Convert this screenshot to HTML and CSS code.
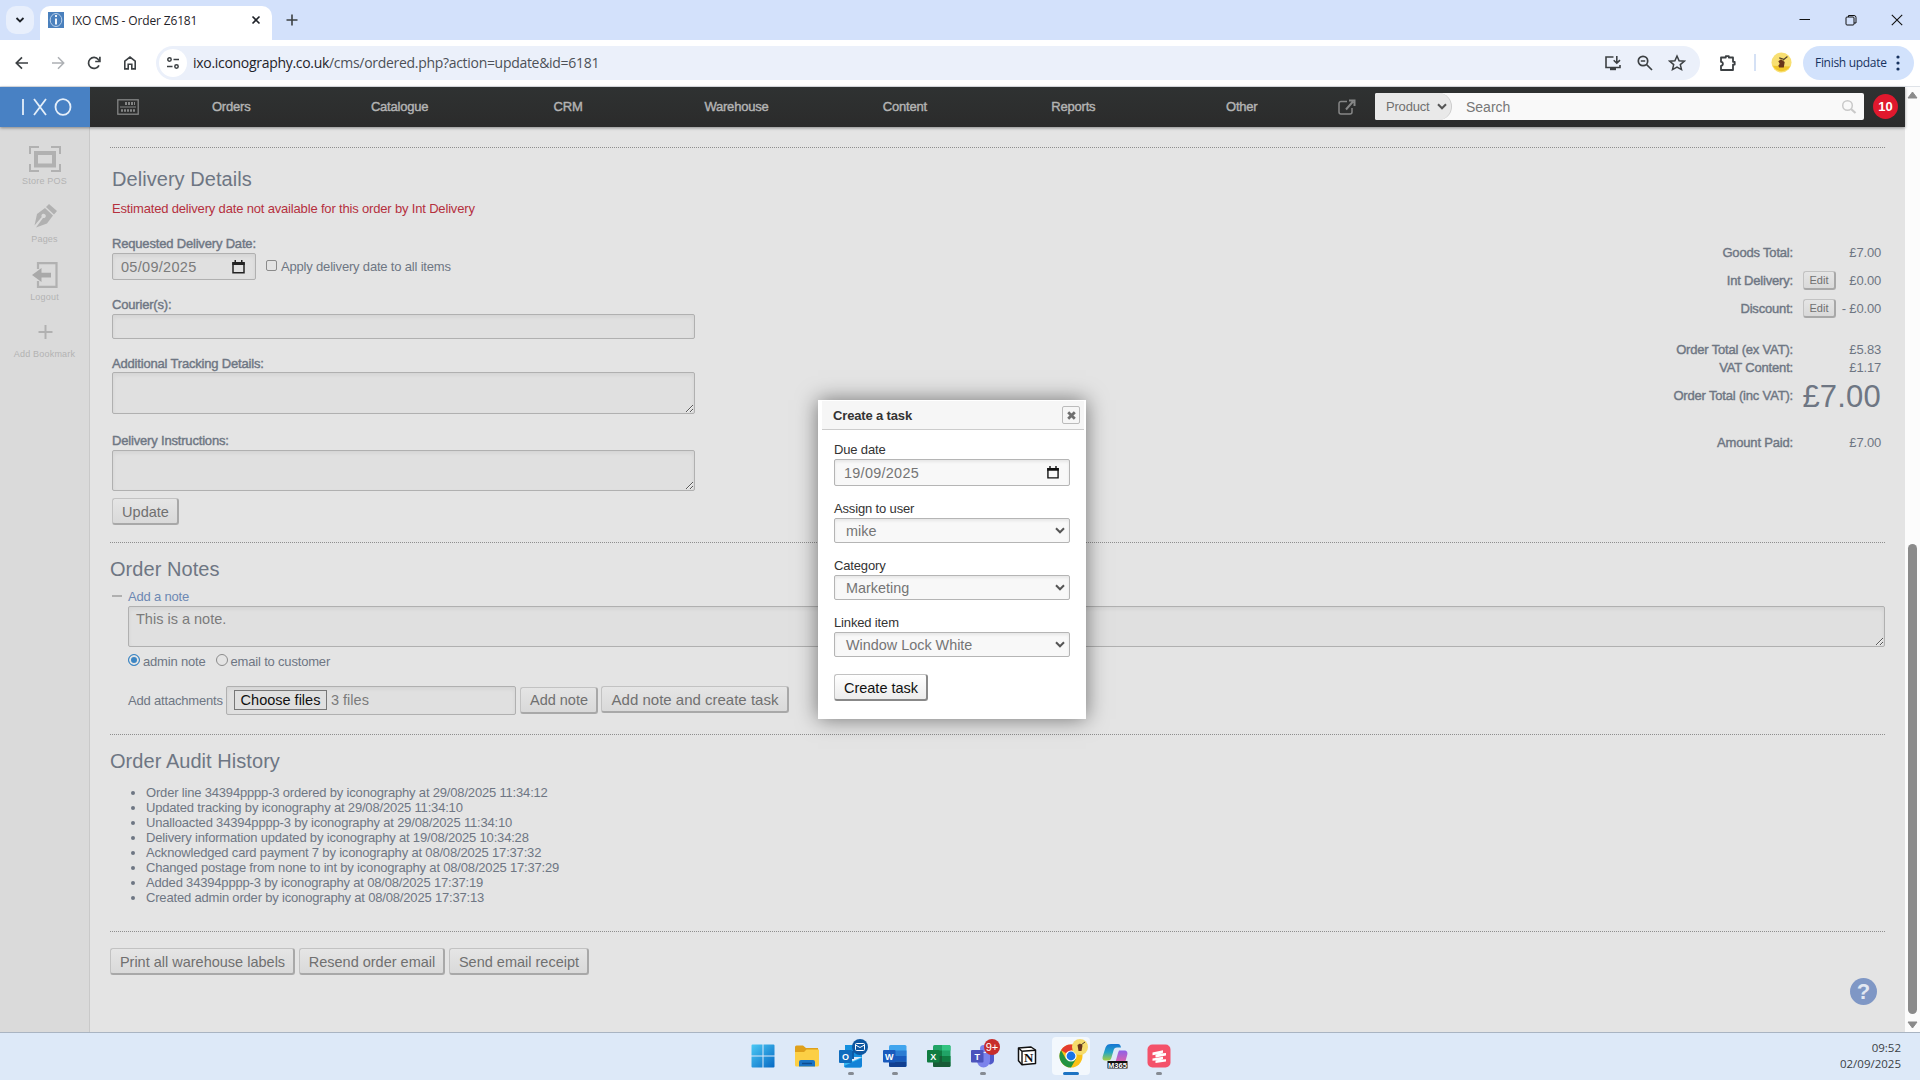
FILE: index.html
```html
<!DOCTYPE html>
<html lang="en">
<head>
    <meta charset="UTF-8">
    <title>IXO CMS - Order Z6181</title>
    <link rel="stylesheet" href="styles.css">
</head>
<body>
    <div class="tabstrip">
        <div class="tab-search"><svg width="10" height="8" viewBox="0 0 10 8"><path d="M1.5 2l3.5 3.5L8.500 2" fill="none" stroke="#1f2329" stroke-width="1.8"/></svg></div>
        <div class="tab">
            <svg width="16" height="16" viewBox="0 0 16 16"><rect width="16" height="16" fill="#4a80bd"/><ellipse cx="8" cy="8" rx="5.800" ry="6.500" fill="none" stroke="#b9d0ea"/><path d="M8 3v2M8 6.500v6" stroke="#fff" stroke-width="1.800"/></svg>
            <span class="tab-title">IXO CMS - Order Z6181</span>
            <svg class="tab-close" width="10" height="10" viewBox="0 0 10 10"><path d="M1.500 1.500l7 7M8.500 1.500l-7 7" stroke="#1f2329" stroke-width="1.600"/></svg>
        </div>
        <svg class="new-tab" width="12" height="12" viewBox="0 0 12 12"><path d="M6 .5v11M.5 6h11" stroke="#3c4043" stroke-width="1.600"/></svg>
        <div class="win-buttons">
            <svg width="12" height="12" viewBox="0 0 12 12"><path d="M.5 5.500h10.500" stroke="#111"/></svg>
            <svg width="12" height="12" viewBox="0 0 12 12" fill="none" stroke="#111"><rect x="1" y="3" width="8" height="8" rx="1"/><path d="M3.500 3V1.500h5.500a2 2 0 0 1 2 2v5.500H9"/></svg>
            <svg width="12" height="12" viewBox="0 0 12 12"><path d="M.8 .8l10.400 10.400M11.200 .8L.8 11.200" stroke="#111" stroke-width="1.100"/></svg>
        </div>
    </div>

    <div class="toolbar">
        <svg class="tool" width="16" height="16" viewBox="0 0 16 16"><path d="M14 8H2.500M8 2.300L2.300 8 8 13.700" fill="none" stroke="#3c4043" stroke-width="1.700"/></svg>
        <svg class="tool" width="16" height="16" viewBox="0 0 16 16"><path d="M2 8h11.500M8 2.300L13.700 8 8 13.700" fill="none" stroke="#adb0b4" stroke-width="1.500"/></svg>
        <svg class="tool" width="16" height="16" viewBox="0 0 16 16"><path d="M13 10.300A5.500 5.500 0 1 1 12.300 4.500L13.400 5.800" fill="none" stroke="#3c4043" stroke-width="1.700"/><path d="M13.900 1.800v4.700H9.200" fill="none" stroke="#3c4043" stroke-width="1.700"/></svg>
        <svg class="tool" width="16" height="16" viewBox="0 0 16 16"><path d="M2.800 6.200L8 2.100l5.200 4.100v7.700h-3.400V9.200H6.200v4.700H2.800z" fill="none" stroke="#3c4043" stroke-width="1.600"/></svg>
        <div class="omnibox">
            <span class="site-info"><svg width="14" height="14" viewBox="0 0 14 14" fill="none" stroke="#3c4043" stroke-width="1.500"><circle cx="3.500" cy="3.500" r="1.700"/><path d="M7.500 3.500H13M1 10.500h5.500"/><circle cx="10.500" cy="10.500" r="1.700"/></svg></span>
            <span class="url">ixo.iconography.co.uk<span>/cms/ordered.php?action=update&amp;id=6181</span></span>
            <div class="omni-icons">
                <svg width="18" height="18" viewBox="0 0 18 18" fill="none" stroke="#3c4043" stroke-width="1.600"><path d="M9.500 3H2v10.500h14V11M12.800 2v7M9.700 6.200l3.100 3 3.200-3"/><path d="M6 15h6" stroke-width="2.400"/></svg>
                <svg width="18" height="18" viewBox="0 0 18 18" fill="none" stroke="#3c4043" stroke-width="1.700"><circle cx="7" cy="7" r="4.700"/><path d="M4.800 7h4.400M10.500 10.500l5.500 5.500"/></svg>
                <svg width="18" height="18" viewBox="0 0 18 18" fill="none" stroke="#3c4043" stroke-width="1.500"><path d="M9 2l2.100 4.700 5.100.500-3.900 3.400 1.200 5L9 13l-4.500 2.600 1.200-5-3.900-3.400 5.100-.5z"/></svg>
            </div>
        </div>
        <svg class="puzzle" width="20" height="20" viewBox="0 0 20 20"><path d="M3 4.500h4.800V3.200h3v1.300H15v4.300h1.700v2.800H15V17H3v-4.200c2.500-.2 2.500-3.900 0-4z" fill="none" stroke="#3c4043" stroke-width="1.800" stroke-linejoin="round"/></svg>
        <span class="divider"></span>
        <svg class="avatar" width="21" height="21" viewBox="0 0 23 23"><circle cx="11.500" cy="11.500" r="11" fill="#f8df72"/><path d="M2 15a11 11 0 0 0 19 1" fill="#f1c62b"/><path d="M8 10l3-2 4 3-1 6H9l-1-2 1.500-2z" fill="#69351b"/><path d="M9 6.500l5 1.500M13 9l5-4" stroke="#53412b" stroke-width="1.300"/></svg>
        <div class="finish">Finish update <svg width="4" height="16" viewBox="0 0 4 16" fill="#17325f"><circle cx="2" cy="2" r="1.600"/><circle cx="2" cy="8" r="1.600"/><circle cx="2" cy="14" r="1.600"/></svg></div>
    </div>

    <div class="viewport">
        <div class="page">
            <div class="topnav">
                <div class="logo"><svg width="52" height="18" viewBox="0 0 52 18" fill="none" stroke="#e4eef9" stroke-width="1.800"><path d="M2 1v16M13 1l12 16M25 1L13 17"/><ellipse cx="42" cy="9" rx="7.500" ry="7.800"/></svg></div>
                <svg class="till" width="22" height="16" viewBox="0 0 22 16"><rect x=".8" y=".8" width="20.400" height="14.400" fill="none" stroke="#858686" stroke-width="1.300"/><path d="M8 4.500h10" stroke="#858686" stroke-width="3" stroke-dasharray="2 1"/><path d="M3 8h16" stroke="#858686"/><path d="M4 11.500h15" stroke="#858686" stroke-width="2.500" stroke-dasharray="2 1"/></svg>
                <div class="menu">
                    <a>Orders</a><a>Catalogue</a><a>CRM</a><a>Warehouse</a><a>Content</a><a>Reports</a><a>Other</a>
                </div>
                <svg class="external" width="18" height="16" viewBox="0 0 18 16" fill="none" stroke="#868787" stroke-width="1.500"><path d="M9 2.500H3a2 2 0 0 0-2 2v8.500a2 2 0 0 0 2 2h9a2 2 0 0 0 2-2V9"/><path d="M8 10.500l7-8M11 1.500h5.500V7" stroke-width="2"/></svg>
                <div class="search">
                    <span class="search-type">Product <svg width="10" height="7" viewBox="0 0 10 7"><path d="M1 1.300l4 4 4-4" fill="none" stroke="#555" stroke-width="2"/></svg></span>
                    <span class="search-text">Search</span>
                    <svg width="16" height="16" viewBox="0 0 16 16" fill="none" stroke="#c9c9c9"><circle cx="6.500" cy="6.500" r="4.800" stroke-width="1.500"/><path d="M10 10l4.500 4" stroke-width="2.200"/></svg>
                </div>
                <span class="alerts">10</span>
            </div>

            <div class="body">
                <div class="sidebar">
                    <div class="bookmark">
                        <svg width="32" height="26" viewBox="0 0 32 26" fill="none" stroke="#b1b1b1"><path d="M1 8V1h9M22 1h9v7M31 18v7h-9M10 25H1v-7" stroke-width="2"/><rect x="7" y="7" width="18" height="12.500" stroke-width="4"/></svg>
                        <span>Store POS</span>
                    </div>
                    <div class="bookmark">
                        <svg width="26" height="26" viewBox="0 0 26 26" fill="#b1b1b1"><path d="M17 0l8 7-3 3.500-8-7.500z"/><path d="M13 4l8 7.500-6 8-11 4 7-9.500a2.200 2.200 0 1 0-1.300-1L2.500 21.500 5 10z"/></svg>
                        <span>Pages</span>
                    </div>
                    <div class="bookmark">
                        <svg width="26" height="26" viewBox="0 0 26 26"><path d="M6 7V1.200h18.500v23.600H6V19" fill="none" stroke="#b1b1b1" stroke-width="2.200"/><path d="M0 13l9.500-7v4.800H19v4.600H9.500V20z" fill="#a9a9a9"/></svg>
                        <span>Logout</span>
                    </div>
                    <div class="bookmark last">
                        <svg width="26" height="26" viewBox="0 0 26 26"><path d="M13.500 6v14M6.500 13h14" stroke="#b1b1b1" stroke-width="2"/></svg>
                        <span>Add Bookmark</span>
                    </div>
                </div>

                <div class="content">
                    <div class="section delivery">
                        <div class="delivery-form">
                            <h2>Delivery Details</h2>
                            <p class="error">Estimated delivery date not available for this order by Int Delivery</p>
                            <label class="l1">Requested Delivery Date:</label>
                            <div class="date-row">
                                <div class="field date">05/09/2025 <svg width="13" height="14" viewBox="0 0 13 14"><path d="M1 3h11v9.800H1z" fill="none" stroke="#222" stroke-width="1.500"/><path d="M.3 2h12.400v3H.3zM2.500 0h1.500v3H2.500zM9 0h1.500v3H9z" fill="#222"/></svg></div>
                                <span class="checkbox"></span><span class="apply">Apply delivery date to all items</span>
                            </div>
                            <label class="l2">Courier(s):</label>
                            <div class="field courier"></div>
                            <label class="l3">Additional Tracking Details:</label>
                            <textarea class="field tracking"></textarea>
                            <label class="l4">Delivery Instructions:</label>
                            <textarea class="field instructions"></textarea>
                            <button class="btn update">Update</button>
                        </div>
                        <div class="totals">
                            <div><b>Goods Total:</b><span>£7.00</span></div>
                            <div><b>Int Delivery:</b><button class="btn small">Edit</button><span>£0.00</span></div>
                            <div><b>Discount:</b><button class="btn small">Edit</button><span>- £0.00</span></div>
                            <div class="short gap1"><b>Order Total (ex VAT):</b><span>£5.83</span></div>
                            <div class="short"><b>VAT Content:</b><span>£1.17</span></div>
                            <div class="grand"><b>Order Total (inc VAT):</b><span>£7.00</span></div>
                            <div class="short gap2"><b>Amount Paid:</b><span>£7.00</span></div>
                        </div>
                    </div>

                    <div class="section notes">
                        <h2>Order Notes</h2>
                        <div class="add-link"><i></i>Add a note</div>
                        <textarea class="field note">This is a note.</textarea>
                        <div class="radios"><span class="radio on"></span><span class="admin">admin note</span><span class="radio"></span><span class="customer">email to customer</span></div>
                        <div class="attach">
                            <span class="attach-label">Add attachments</span>
                            <div class="field files"><span class="choose">Choose files</span>3 files</div>
                            <button class="btn add-note">Add note</button>
                            <button class="btn add-task">Add note and create task</button>
                        </div>
                    </div>

                    <div class="section audit">
                        <h2>Order Audit History</h2>
                        <ul>
                            <li>Order line 34394pppp-3 ordered by iconography at 29/08/2025 11:34:12</li>
                            <li>Updated tracking by iconography at 29/08/2025 11:34:10</li>
                            <li>Unalloacted 34394pppp-3 by iconography at 29/08/2025 11:34:10</li>
                            <li>Delivery information updated by iconography at 19/08/2025 10:34:28</li>
                            <li>Acknowledged card payment 7 by iconography at 08/08/2025 17:37:32</li>
                            <li>Changed postage from none to int by iconography at 08/08/2025 17:37:29</li>
                            <li>Added 34394pppp-3 by iconography at 08/08/2025 17:37:19</li>
                            <li>Created admin order by iconography at 08/08/2025 17:37:13</li>
                        </ul>
                    </div>

                    <div class="section actions">
                        <button class="btn print">Print all warehouse labels</button>
                        <button class="btn resend">Resend order email</button>
                        <button class="btn receipt">Send email receipt</button>
                    </div>
                </div>
            </div>
        </div>
        <div class="scrollbar">
            <svg width="11" height="8" viewBox="0 0 11 8"><path d="M5.500 1L10 7H1z" fill="#8b8b8b" stroke="#8b8b8b" stroke-linejoin="round"/></svg>
            <span class="thumb"></span>
            <svg width="11" height="8" viewBox="0 0 11 8"><path d="M5.500 7L1 1h9z" fill="#8b8b8b" stroke="#8b8b8b" stroke-linejoin="round"/></svg>
        </div>
    </div>

    <div class="help">?</div>

    <div class="dialog">
        <div class="dialog-title">Create a task
            <span class="dialog-close"><svg width="9" height="9" viewBox="0 0 9 9"><path d="M1.200 1.200l6.600 6.600M7.800 1.200L1.200 7.800" stroke="#6f6f6f" stroke-width="2.800"/></svg></span>
        </div>
        <div class="dialog-body">
            <label>Due date</label>
            <div class="input due">19/09/2025 <svg width="12" height="13" viewBox="0 0 13 14"><path d="M1 3h11v9.800H1z" fill="none" stroke="#111" stroke-width="1.500"/><path d="M.3 2h12.400v3H.3zM2.500 0h1.500v3H2.500zM9 0h1.500v3H9z" fill="#111"/></svg></div>
            <label>Assign to user</label>
            <div class="input">mike <svg width="10" height="7" viewBox="0 0 10 7"><path d="M1 1.300l4 4 4-4" fill="none" stroke="#555" stroke-width="2"/></svg></div>
            <label>Category</label>
            <div class="input">Marketing <svg width="10" height="7" viewBox="0 0 10 7"><path d="M1 1.300l4 4 4-4" fill="none" stroke="#555" stroke-width="2"/></svg></div>
            <label>Linked item</label>
            <div class="input">Window Lock White <svg width="10" height="7" viewBox="0 0 10 7"><path d="M1 1.300l4 4 4-4" fill="none" stroke="#555" stroke-width="2"/></svg></div>
            <button class="btn create">Create task</button>
        </div>
    </div>

    <div class="taskbar">
        <div class="apps">
            <div class="app">
                <svg width="24" height="24" viewBox="0 0 24 24"><defs><linearGradient id="win" x2="1" y2="1"><stop stop-color="#4cc9f5"/><stop offset="1" stop-color="#0669c4"/></linearGradient></defs><path d="M1.500 .5h10v11H.5v-10a1 1 0 0 1 1-1zM12.500 .5h10a1 1 0 0 1 1 1v10h-11zM.5 12.500h11v11h-10a1 1 0 0 1-1-1zM12.500 12.500h11v10a1 1 0 0 1-1 1h-10z" fill="url(#win)"/></svg>
            </div>
            <div class="app">
                <svg width="26" height="24" viewBox="0 0 26 24"><path d="M1 3a1.500 1.500 0 0 1 1.500-1.500H9L12 4h12v8H1z" fill="#dfa01b"/><path d="M1 8h9l2.500-2.500H25V21a1.500 1.500 0 0 1-1.500 1.500h-21A1.500 1.500 0 0 1 1 21z" fill="#fccf45"/><path d="M5 22.500V18a2 2 0 0 1 2-2h12a2 2 0 0 1 2 2v4.500z" fill="#1974c5"/><path d="M8 19.500h10" stroke="#0c4b8e" stroke-width="1.500"/></svg>
            </div>
            <div class="app running">
                <svg width="24" height="24" viewBox="0 0 24 24"><path d="M6 1h17v12H6z" fill="#1490df"/><path d="M6 7h9v8H6z" fill="#0a5ca8"/><path d="M5 13l9 4 9-4v9a1.500 1.500 0 0 1-1.500 1.500H6.500A1.500 1.500 0 0 1 5 22z" fill="#35b8f1"/><path d="M5 22l18-8v8l-1.500 1.500H6.500z" fill="#1282d7"/><rect y="6" width="13" height="13" rx="1" fill="#0f6cbd"/><text x="6.500" y="16" class="app-letter">O</text></svg>
                <span class="badge mail"><svg width="10" height="8" viewBox="0 0 10 8" fill="none" stroke="#fff"><rect x=".5" y=".5" width="9" height="7" rx="1"/><path d="M.5 2L5 4.500 9.500 2"/></svg></span>
            </div>
            <div class="app running">
                <svg width="24" height="24" viewBox="0 0 24 24"><rect x="6" y="1" width="17.500" height="22" rx="1.500" fill="#41a5ee"/><path d="M6 6.500h17.500V12H6z" fill="#2b7cd3"/><path d="M6 12h17.500v5.500H6z" fill="#185abd"/><path d="M6 17.500h17.500v4A1.500 1.500 0 0 1 22 23H7.500A1.500 1.500 0 0 1 6 21.500z" fill="#103f91"/><rect y="6" width="12.500" height="12.500" rx="1" fill="#185abd"/><text x="6.200" y="15.800" class="app-letter">W</text></svg>
            </div>
            <div class="app">
                <svg width="24" height="24" viewBox="0 0 24 24"><rect x="6" y="1" width="17.500" height="22" rx="1.500" fill="#21a366"/><path d="M15 1h7a1.500 1.500 0 0 1 1.500 1.500v4H15z" fill="#33c481"/><path d="M6 6.500h9V12H6z" fill="#107c41"/><path d="M6 12h9v11H7.500A1.500 1.500 0 0 1 6 21.500z" fill="#185c37"/><path d="M15 12h8.500v5.500H15z" fill="#107c41"/><path d="M15 17.500h8.500v4A1.500 1.500 0 0 1 22 23h-7z" fill="#185c37"/><rect y="6" width="12.500" height="12.500" rx="1" fill="#107c41"/><text x="6.200" y="16" class="app-letter">X</text></svg>
            </div>
            <div class="app running">
                <svg width="24" height="24" viewBox="0 0 24 24"><circle cx="19.500" cy="7" r="2.500" fill="#5059c9"/><circle cx="12.500" cy="4.500" r="3.500" fill="#7b83eb"/><path d="M16 10h7v7a4 4 0 0 1-7 2z" fill="#5059c9"/><path d="M6 9h13v8a6.500 6.500 0 0 1-13 0z" fill="#7b83eb"/><rect y="6" width="12.500" height="12.500" rx="1" fill="#4b53bc"/><text x="6.200" y="16" class="app-letter">T</text></svg>
                <span class="badge count">9+</span>
            </div>
            <div class="app">
                <svg width="20" height="20" viewBox="0 0 20 20"><path d="M1.500 2L14 1l4.500 3v13.500L5 18.800l-3.500-4z" fill="#fff" stroke="#111" stroke-width="1.500" stroke-linejoin="round"/><path d="M1.500 2L5 5.200l13.500-1M5 5.200v13.600" fill="none" stroke="#111" stroke-width="1.400"/><text x="11.800" y="16" class="notion-n">N</text></svg>
            </div>
            <div class="app active">
                <svg width="24" height="24" viewBox="0 0 24 24"><circle cx="12" cy="12" r="11.500" fill="#fbc116"/><path d="M12 12L2.040 6.250A11.500 11.500 0 0 1 21.960 6.250H12z" fill="#e33b2e"/><path d="M2.040 6.250A11.500 11.500 0 0 0 12 23.500L17 14.900 12 12 7 14.900z" fill="#229342"/><circle cx="12" cy="12" r="5.600" fill="#fff"/><circle cx="12" cy="12" r="4.400" fill="#1a73e8"/></svg>
                <span class="badge bee"><svg width="16" height="16" viewBox="0 0 16 16"><circle cx="8" cy="8" r="8" fill="#f6dc6c"/><path d="M5.500 6L8 4.500l2.500 2-1 5.500H6.500z" fill="#69351b"/><path d="M9 6l4-3" stroke="#53412b"/></svg></span>
            </div>
            <div class="app">
                <svg width="26" height="26" viewBox="0 0 26 26"><defs><linearGradient id="cp1" x2="0" y2="1"><stop stop-color="#1574d4"/><stop offset=".5" stop-color="#25a5c4"/><stop offset="1" stop-color="#a8ce3d"/></linearGradient><linearGradient id="cp2" x2="0" y2="1"><stop stop-color="#8d62e8"/><stop offset="1" stop-color="#f2659c"/></linearGradient></defs><path d="M9 1h7c2 0 2.500 1.500 3 3.500H15c-2 0-3 1-3.500 3l-2 7c-.5 2-1.500 3-3 3H3c-2 0-3-1.500-2.300-4l2.800-9C4.500 2 6 1 9 1z" fill="url(#cp1)"/><path d="M17 7.500h5c3 0 4 2 3.200 4.500l-1.700 6c-.8 3-2.500 4-5 4H10c2 0 3-1 3.500-3l2.500-9z" fill="url(#cp2)"/><rect x="5.500" y="18" width="20" height="7.500" fill="#111"/><text x="15.500" y="24.500" class="m365">M365</text></svg>
            </div>
            <div class="app running">
                <svg width="24" height="24" viewBox="0 0 24 24"><rect x=".5" y=".5" width="23" height="23" rx="5" fill="#f4526a"/><path d="M5.500 8.500L16 6.200v2.600l-3 .7 6-.5v2.500L8.500 13.500v-2.600l2.500-.6-5.500.9zM5.500 14.500L16 12.700v2.400l-2.500.5 5.500-.4v2.300L8.500 19v-2.300l2.500-.5-5.500.6z" fill="#fff"/></svg>
            </div>
        </div>
        <div class="clock">09:52<br>02/09/2025</div>
    </div>
</body>
</html>
```
FILE: styles.css
```css
* {
    box-sizing: border-box;
}
body {
    margin: 0;
    width: 1920px;
    height: 1080px;
    overflow: hidden;
    font-family: "Liberation Sans", Arial, sans-serif;
    font-size: 13px;
    color: #6e7683;
}
svg {
    flex: none;
    display: block;
}

/* browser window */
.tabstrip {
    height: 40px;
    background: #d3e1fb;
    display: flex;
    align-items: center;
    padding-left: 6px;
}
.tab-search {
    width: 28px;
    height: 28px;
    border-radius: 10px;
    background: #e8effc;
    display: flex;
    align-items: center;
    justify-content: center;
}
.tab {
    align-self: flex-end;
    width: 232px;
    height: 34px;
    margin-left: 6px;
    padding: 0 11px 6px 8px;
    background: #fff;
    border-radius: 10px 10px 0 0;
    display: flex;
    align-items: center;
}
.tab-title {
    margin-left: 8px;
    font-family: "Open Sans", sans-serif;
    font-size: 12px;
    letter-spacing: -0.15px;
    color: #1f2329;
    white-space: nowrap;
}
.tab-close {
    margin-left: auto;
}
.new-tab {
    margin-left: 14px;
}
.win-buttons {
    margin-left: auto;
    margin-right: 17px;
    display: flex;
    gap: 34px;
}
.toolbar {
    height: 47px;
    background: #fff;
    display: flex;
    align-items: center;
    padding: 0 6px 1px 14px;
    border-bottom: 1px solid #dfe3e8;
}
.tool {
    margin-right: 20px;
}
.omnibox {
    width: 1544px;
    height: 34px;
    border-radius: 17px;
    background: #ebf0fa;
    display: flex;
    align-items: center;
    padding: 0 14px 0 3px;
    margin-left: -2px;
}
.site-info {
    width: 28px;
    height: 28px;
    border-radius: 50%;
    background: #fff;
    display: flex;
    align-items: center;
    justify-content: center;
}
.url {
    margin-left: 6px;
    font-family: "Open Sans", sans-serif;
    font-size: 14px;
    letter-spacing: -0.3px;
    color: #1f2329;
    white-space: nowrap;
}
.url span {
    color: #4d5157;
}
.omni-icons {
    margin-left: auto;
    display: flex;
    gap: 14px;
}
.puzzle {
    margin-left: 18px;
}
.divider {
    width: 2px;
    height: 17px;
    margin: 0 15px 0 16px;
    background: #d5e1f5;
}
.finish {
    margin-left: auto;
    width: 111px;
    height: 34px;
    border-radius: 17px;
    background: #d2e2fc;
    display: flex;
    align-items: center;
    justify-content: space-between;
    padding: 0 14px 0 12px;
    font-family: "Open Sans", sans-serif;
    font-size: 12px;
    letter-spacing: -0.3px;
    color: #17325f;
    white-space: nowrap;
}
.viewport {
    height: 945px;
    display: flex;
}
.page {
    width: 1905px;
}
.scrollbar {
    width: 15px;
    background: #fcfcfc;
    display: flex;
    flex-direction: column;
    align-items: center;
    padding: 4px 1px 3px 0;
}
.thumb {
    width: 9px;
    height: 470px;
    margin: auto 0 7px;
    border-radius: 5px;
    background: #8b8b8b;
}

/* top navigation */
.topnav {
    height: 40px;
    padding-bottom: 1px;
    background: linear-gradient(#2f3232, #2b2b2b);
    display: flex;
    align-items: center;
    position: relative;
    box-shadow: 0 1px 3px rgba(0, 0, 0, 0.4);
}
.logo {
    width: 90px;
    height: 40px;
    margin-bottom: -1px;
    background: #4881c4;
    display: flex;
    align-items: center;
    justify-content: center;
    padding: 0 0 1px 3px;
}
.till {
    margin-left: 27px;
}
.menu {
    width: 1179px;
    margin-left: 8px;
    display: flex;
}
.menu a {
    flex: 1;
    text-align: center;
    color: #b4b4b4;
    letter-spacing: -0.2px;
    -webkit-text-stroke: 0.4px #b4b4b4;
}
.external {
    margin-left: 12px;
}
.search {
    width: 489px;
    height: 27px;
    margin-left: 19px;
    border-radius: 2px;
    background: #f9f9f9;
    display: flex;
    align-items: center;
    padding-right: 7px;
}
.search-type {
    width: 77px;
    height: 27px;
    border-radius: 2px 14px 14px 2px;
    border-right: 1px solid #ccc;
    background: #e9e9e9;
    display: flex;
    align-items: center;
    justify-content: space-between;
    padding: 0 4px 0 11px;
    letter-spacing: -0.2px;
    color: #707070;
}
.search-text {
    margin-left: 14px;
    margin-right: auto;
    font-size: 14px;
    color: #777;
}
.alerts {
    width: 25px;
    height: 25px;
    margin-left: 9px;
    border-radius: 50%;
    background: #e0182d;
    color: #fff;
    font-weight: bold;
    text-align: center;
    line-height: 25px;
}

/* page body */
.body {
    height: 905px;
    display: flex;
}
.sidebar {
    width: 90px;
    background: #dadada;
    border-right: 1px solid #c9c9c9;
    padding-top: 19px;
}
.bookmark {
    height: 58px;
    display: flex;
    flex-direction: column;
    align-items: center;
    font-size: 9px;
    line-height: 12px;
    letter-spacing: 0.2px;
    color: #b3b3b3;
    white-space: nowrap;
}
.bookmark span {
    margin-top: 3px;
}
.last {
    margin-top: -1px;
}
.content {
    width: 1815px;
    padding: 20px 20px 0;
    background: #e4e4e4;
    letter-spacing: -0.18px;
}
.section {
    border-top: 1px dotted #8e8e8e;
    padding-top: 14px;
}
h2 {
    margin: 0;
    font-size: 20px;
    font-weight: normal;
    line-height: 24px;
    letter-spacing: 0.05px;
}
.field {
    border: 1px solid #b0b0b0;
    border-radius: 2px;
    background: #e0e0e0;
    box-shadow: inset 0 2px 4px rgba(0, 0, 0, 0.06);
    color: #7b7b7b;
    font-size: 14.5px;
    letter-spacing: 0;
    display: flex;
    align-items: center;
}
textarea.field {
    display: block;
    font-family: inherit;
    outline: none;
}
.btn {
    height: 27px;
    padding: 1px 0 0 1px;
    border: 1px solid #c2c2c2;
    border-right: 2px solid #a8a8a8;
    border-bottom: 2px solid #a8a8a8;
    border-radius: 3px;
    background: linear-gradient(#e5e5e5, #d9d9d9);
    font-family: inherit;
    font-size: 14.5px;
    color: #707070;
    white-space: nowrap;
}
.delivery {
    height: 395px;
    padding-top: 19px;
    display: flex;
    justify-content: space-between;
}
.delivery-form {
    width: 585px;
    padding-left: 2px;
}
.delivery-form label {
    display: block;
    line-height: 16px;
    -webkit-text-stroke: 0.4px #6e7683;
}
.error {
    margin: 9px 0 18px;
    line-height: 18px;
    letter-spacing: -0.17px;
    color: #b5303e;
}
.date-row {
    margin-top: 1px;
    display: flex;
    align-items: center;
}
.date {
    width: 144px;
    height: 27px;
    padding: 0 10px 0 8px;
    justify-content: space-between;
    letter-spacing: 0.3px;
}
.checkbox {
    width: 11px;
    height: 11px;
    margin: 0 4px 2px 10px;
    border: 1px solid #8b8b8b;
    border-radius: 2px;
}
.l2 {
    margin: 17px 0 1px;
}
.courier {
    height: 25px;
}
.l3 {
    margin-top: 17px;
}
.tracking, .instructions {
    width: 583px;
    height: 42px;
}
.l4 {
    margin: 19px 0 1px;
}
.instructions {
    height: 41px;
}
.update {
    width: 67px;
    margin-top: 7px;
}
.totals {
    width: 330px;
    padding: 71px 4px 0 0;
}
.totals div {
    height: 28px;
    display: flex;
    align-items: center;
}
.totals b {
    width: 238px;
    text-align: right;
    font-weight: normal;
    -webkit-text-stroke: 0.4px #6e7683;
}
.totals span {
    margin-left: auto;
}
.totals .short {
    height: 18px;
}
.totals .gap1 {
    margin-top: 18px;
}
.totals .grand {
    height: 38px;
}
.totals .grand span {
    padding-top: 3px;
    font-size: 31px;
    letter-spacing: 0.2px;
}
.totals .gap2 {
    margin-top: 19px;
}
.btn.small {
    width: 33px;
    height: 19px;
    margin-left: 10px;
    padding: 0;
    font-size: 11px;
    line-height: 14px;
}
.notes {
    height: 192px;
}
.add-link {
    height: 18px;
    margin: 6px 0 1px;
    display: flex;
    align-items: center;
    color: #6d88b3;
}
.add-link i {
    width: 10px;
    height: 2px;
    margin: 0 6px 0 2px;
    background: #b0b0b0;
}
.note {
    width: 1757px;
    height: 41px;
    margin-left: 18px;
    padding: 4px 7px;
}
.radios {
    height: 18px;
    margin: 5px 0 0 18px;
    display: flex;
    align-items: center;
}
.radio {
    width: 12px;
    height: 12px;
    margin: 0 3px 2px 0;
    border: 1px solid #8b8b8b;
    border-radius: 50%;
}
.radio.on {
    border-color: #3c86c4;
    background: #3c86c4;
    box-shadow: inset 0 0 0 2px #e4e4e4;
}
.admin {
    margin-right: 10px;
}
.attach {
    height: 30px;
    margin: 15px 0 0 18px;
    display: flex;
    align-items: center;
}
.attach-label {
    width: 98px;
    white-space: nowrap;
}
.files {
    width: 290px;
    height: 29px;
    padding-left: 7px;
}
.choose {
    width: 93px;
    height: 20px;
    margin-right: 4px;
    border: 1px solid #777;
    text-align: center;
    line-height: 18px;
    color: #111;
}
.add-note {
    width: 78px;
    margin: 0 3px 0 4px;
}
.add-task {
    width: 188px;
    margin-bottom: 2px;
    font-size: 15px;
}
.audit {
    height: 197px;
}
.audit ul {
    margin: 12px 0 0;
    padding-left: 36px;
    line-height: 15px;
}
.actions {
    display: flex;
    gap: 4px;
    padding-top: 16px;
}
.print {
    width: 185px;
}
.resend {
    width: 146px;
}
.receipt {
    width: 140px;
}
.help {
    position: absolute;
    left: 1850px;
    top: 978px;
    width: 27px;
    height: 27px;
    border-radius: 50%;
    background: #7f97c5;
    color: #e2e8f2;
    font-size: 22px;
    font-weight: bold;
    line-height: 27px;
    text-align: center;
}

/* create task dialog */
.dialog {
    position: absolute;
    left: 818px;
    top: 400px;
    width: 268px;
    height: 319px;
    background: #fff;
    box-shadow: 0 0 20px rgba(0, 0, 0, 0.5);
    color: #333;
}
.dialog-title {
    height: 29px;
    margin: 1px 2px 0 4px;
    padding: 0 4px 0 11px;
    border-bottom: 1px solid #ccc;
    background: #f6f6f6;
    display: flex;
    align-items: center;
    justify-content: space-between;
    font-weight: bold;
    letter-spacing: -0.15px;
}
.dialog-close {
    width: 18px;
    height: 18px;
    border: 1px solid #bbb;
    border-radius: 2px;
    display: flex;
    align-items: center;
    justify-content: center;
}
.dialog-body {
    padding: 12px 16px 0;
}
.dialog-body label {
    display: block;
    line-height: 16px;
    margin-bottom: 1px;
    letter-spacing: -0.15px;
}
.input {
    height: 25px;
    margin-bottom: 15px;
    padding: 0 4px 0 11px;
    border: 1px solid #b5b5b5;
    border-radius: 2px;
    background: #f8f8f8;
    box-shadow: inset 0 2px 3px rgba(0, 0, 0, 0.07);
    display: flex;
    align-items: center;
    justify-content: space-between;
    font-size: 14.4px;
    color: #757575;
}
.due {
    height: 27px;
    padding: 0 10px 0 9px;
    letter-spacing: 0.3px;
}
.create {
    width: 94px;
    margin-top: 2px;
    background: linear-gradient(#fff, #ececec);
    border-right-color: #888;
    border-bottom-color: #888;
    color: #111;
}

/* taskbar */
.taskbar {
    position: relative;
    height: 48px;
    background: #dde9f8;
    border-top: 1px solid #a9b4c2;
}
.apps {
    height: 46px;
    padding-left: 2px;
    display: flex;
    justify-content: center;
}
.app {
    position: relative;
    width: 44px;
    display: flex;
    align-items: center;
    justify-content: center;
}
.running::after {
    content: "";
    position: absolute;
    bottom: 4px;
    width: 6px;
    height: 3px;
    border-radius: 2px;
    background: #858b93;
}
.active::before {
    content: "";
    position: absolute;
    left: 3px;
    top: 4px;
    width: 38px;
    height: 38px;
    border-radius: 4px;
    background: #f3f8fd;
}
.active::after {
    content: "";
    position: absolute;
    bottom: 4px;
    width: 16px;
    height: 3px;
    border-radius: 2px;
    background: #1c73c3;
}
.active svg {
    position: relative;
}
.badge {
    position: absolute;
    left: 23px;
    top: 6px;
    width: 16px;
    height: 16px;
    border-radius: 50%;
    display: flex;
    align-items: center;
    justify-content: center;
}
.mail {
    background: #0d56a0;
}
.count {
    background: #c72d2b;
    color: #fff;
    font-size: 11px;
}
.app-letter {
    font-size: 9px;
    font-weight: bold;
    fill: #fff;
    text-anchor: middle;
}
.notion-n {
    font-family: "Liberation Serif", serif;
    font-size: 13px;
    font-weight: bold;
    fill: #111;
    text-anchor: middle;
}
.m365 {
    font-size: 7.5px;
    font-weight: bold;
    fill: #fff;
    text-anchor: middle;
}
.clock {
    position: absolute;
    right: 19px;
    top: 7px;
    font-family: "Open Sans", sans-serif;
    font-size: 11.5px;
    line-height: 16px;
    letter-spacing: 0;
    text-align: right;
    color: #3b3f45;
}
```
